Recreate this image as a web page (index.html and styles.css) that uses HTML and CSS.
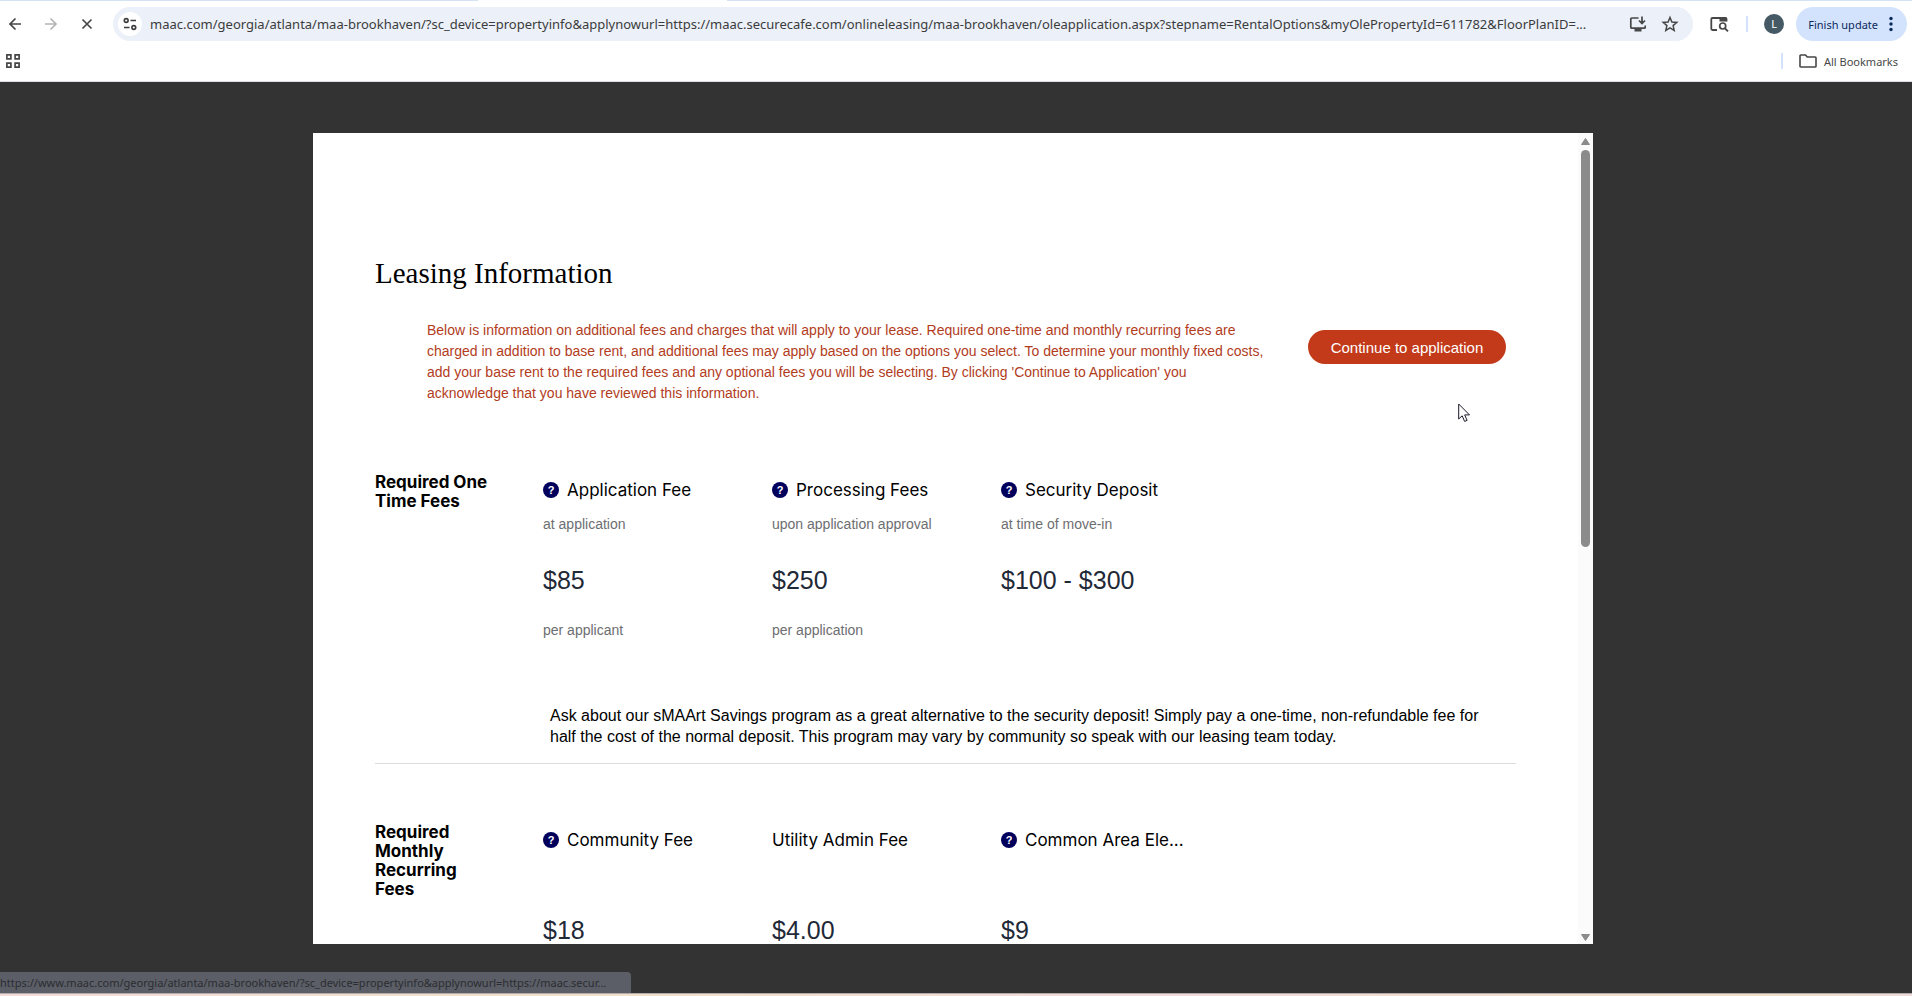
FILE: index.html
```html
<!DOCTYPE html>
<html lang="en">
<head>
<meta charset="utf-8">
<title>Leasing Information</title>
<link rel="stylesheet" href="styles.css">
</head>
<body>
<div class="browser">
  <header class="chrome">
    <div class="tab-edge"></div>
    <div class="toolbar">
      <nav class="nav">
        <button class="icon-btn" aria-label="Back"><svg width="18" height="18" viewBox="0 0 18 18"><path d="M9.500 3.500 4 9l5.500 5.500M4 9h11" fill="none" stroke="#474747" stroke-width="1.700"/></svg></button>
        <button class="icon-btn" aria-label="Forward"><svg width="18" height="18" viewBox="0 0 18 18"><path d="M8.500 3.500 14 9l-5.500 5.500M14 9H3" fill="none" stroke="#b4b4b4" stroke-width="1.700"/></svg></button>
        <button class="icon-btn" aria-label="Stop"><svg width="18" height="18" viewBox="0 0 18 18"><path d="M4.500 4.500l9 9M13.500 4.500l-9 9" fill="none" stroke="#474747" stroke-width="1.700"/></svg></button>
      </nav>
      <div class="omnibox">
        <button class="site-info" aria-label="View site information"><svg width="14" height="14" viewBox="0 0 14 14" fill="none" stroke="#3c3c3c" stroke-width="1.600"><circle cx="3.200" cy="3.500" r="1.900"/><path d="M7.500 3.500H13M1 10.500h5.500"/><circle cx="10.800" cy="10.500" r="1.900"/></svg></button>
        <input class="url" type="text" aria-label="Address" readonly value="maac.com/georgia/atlanta/maa-brookhaven/?sc_device=propertyinfo&amp;applynowurl=https://maac.securecafe.com/onlineleasing/maa-brookhaven/oleapplication.aspx?stepname=RentalOptions&amp;myOlePropertyId=611782&amp;FloorPlanID=...">
        <button class="icon-btn" aria-label="Install app"><svg width="18" height="18" viewBox="0 0 18 18" fill="none" stroke="#474747" stroke-width="1.700"><path d="M9.500 3H2.800c-.6 0-1 .4-1 1v8.200c0 .6.400 1 1 1h12.400c.6 0 1-.4 1-1V10.500M13 1.500v6.500M10 5.500l3 3 3-3"/><path d="M5.500 15.200h7" stroke-width="2.600"/></svg></button>
        <button class="icon-btn" aria-label="Bookmark this tab"><svg width="18" height="18" viewBox="0 0 18 18"><path d="M9 2.500l1.900 4.500 4.900.4-3.700 3.200 1.100 4.800L9 12.900l-4.200 2.500 1.100-4.800-3.700-3.200 4.900-.4z" fill="none" stroke="#474747" stroke-width="1.500"/></svg></button>
      </div>
      <button class="icon-btn lens" aria-label="Search this page"><svg width="20" height="18" viewBox="0 0 20 18"><path d="M8 15H3.500c-.7 0-1.200-.5-1.200-1.200V4.200C2.300 3.500 2.800 3 3.500 3h13c.6 0 1 .4 1 1v2.500" fill="none" stroke="#474747" stroke-width="1.800"/><path d="M10.500 2.500h7v4h-7z" fill="#474747"/><circle cx="13.700" cy="11" r="3" fill="none" stroke="#474747" stroke-width="1.700"/><path d="M16 13.300l3 3" stroke="#474747" stroke-width="1.900"/></svg></button>
      <span class="sep"></span>
      <button class="avatar" aria-label="Profile">L</button>
      <button class="update"><span>Finish update</span><svg width="4" height="16" viewBox="0 0 4 16" fill="#0b2a5c"><circle cx="2" cy="2.500" r="1.700"/><circle cx="2" cy="8" r="1.700"/><circle cx="2" cy="13.500" r="1.700"/></svg></button>
    </div>
    <div class="bookmarks">
      <button class="icon-btn" aria-label="Apps"><svg width="14" height="14" viewBox="0 0 14 14" fill="none" stroke="#474747" stroke-width="1.700"><path d="M.9.900h4v4h-4zM9.100.900h4v4h-4zM.9 9.100h4v4h-4zM9.100 9.100h4v4h-4z"/></svg></button>
      <div class="all">
        <span class="sep"></span>
        <button class="all-btn"><svg width="18" height="14" viewBox="0 0 18 14"><path d="M1.800 1h4.700l1.800 2h7.900c.5 0 .8.300.8.800v8.400c0 .5-.3.800-.8.800H1.800c-.5 0-.8-.3-.8-.8V1.800c0-.5.300-.8.800-.8z" fill="none" stroke="#474747" stroke-width="1.600"/></svg><span>All Bookmarks</span></button>
      </div>
    </div>
  </header>
  <main class="page">
    <div class="dialog" role="dialog" aria-labelledby="title">
      <div class="content">
        <h1 class="title" id="title">Leasing Information</h1>
        <div class="intro">
          <p class="intro-text">Below is information on additional fees and charges that will apply to your lease. Required one-time and monthly recurring fees are<br>charged in addition to base rent, and additional fees may apply based on the options you select. To determine your monthly fixed costs,<br>add your base rent to the required fees and any optional fees you will be selecting. By clicking 'Continue to Application' you<br>acknowledge that you have reviewed this information.</p>
          <button class="continue">Continue to application</button>
        </div>
        <section class="fees">
          <h2 class="group">Required One<br>Time Fees</h2>
          <article class="fee">
            <h3 class="name"><button class="help" aria-label="About Application Fee">?</button>Application Fee</h3>
            <p class="when">at application</p>
            <p class="amount">$85</p>
            <p class="per">per applicant</p>
          </article>
          <article class="fee">
            <h3 class="name"><button class="help" aria-label="About Processing Fees">?</button>Processing Fees</h3>
            <p class="when">upon application approval</p>
            <p class="amount">$250</p>
            <p class="per">per application</p>
          </article>
          <article class="fee">
            <h3 class="name"><button class="help" aria-label="About Security Deposit">?</button>Security Deposit</h3>
            <p class="when">at time of move-in</p>
            <p class="amount">$100 - $300</p>
          </article>
          <p class="note">Ask about our sMAArt Savings program as a great alternative to the security deposit! Simply pay a one-time, non-refundable fee for<br>half the cost of the normal deposit. This program may vary by community so speak with our leasing team today.</p>
        </section>
        <section class="fees monthly">
          <h2 class="group">Required<br>Monthly<br>Recurring<br>Fees</h2>
          <article class="fee">
            <h3 class="name"><button class="help" aria-label="About Community Fee">?</button>Community Fee</h3>
            <p class="when"></p>
            <p class="amount">$18</p>
          </article>
          <article class="fee">
            <h3 class="name">Utility Admin Fee</h3>
            <p class="when"></p>
            <p class="amount">$4.00</p>
          </article>
          <article class="fee">
            <h3 class="name"><button class="help" aria-label="About Common Area Electric">?</button>Common Area Ele...</h3>
            <p class="when"></p>
            <p class="amount">$9</p>
          </article>
        </section>
      </div>
      <div class="scrollbar">
        <svg width="9" height="7" viewBox="0 0 9 7"><path d="M4.500.5 8.500 6.500h-8z" fill="#8b8b8b" stroke="#8b8b8b" stroke-linejoin="round"/></svg>
        <div class="track"><div class="thumb"></div></div>
        <svg width="9" height="7" viewBox="0 0 9 7"><path d="M4.500 6.500 8.500.5h-8z" fill="#8b8b8b" stroke="#8b8b8b" stroke-linejoin="round"/></svg>
      </div>
    </div>
    <div class="status"><span>https://www.maac.com/georgia/atlanta/maa-brookhaven/?sc_device=propertyinfo&amp;applynowurl=https://maac.secur...</span></div>
    <svg class="cursor" width="13" height="20" viewBox="0 0 13 20"><path d="M.7 1v15l3.500-3.200 2.400 5.600 2.500-1-2.400-5.500h4.800z" fill="#fff" stroke="#1b1b2a"/></svg>
  </main>
  <div class="desktop-edge"></div>
</div>
</body>
</html>
```
FILE: styles.css
```css
* { box-sizing: border-box; }
body, h1, h2, h3, p { margin: 0; }
body { font-family: "Liberation Sans", Arial, sans-serif; background: #333; }
button, input { font: inherit; color: inherit; border: 0; padding: 0; margin: 0; background: none; }

.browser { display: flex; flex-direction: column; height: 100vh; overflow: hidden; }

/* Browser toolbar */
.chrome { flex: none; background: #fff; border-bottom: 1px solid #dcdfe3; font-family: "Noto Sans", "Open Sans", sans-serif; color: #474747; }
.tab-edge { height: 1px; background: linear-gradient(90deg, #d3e3f3 25%, #fff 25%, #fff 38%, #d3e3f3 38%); }
.toolbar { display: flex; align-items: center; height: 46px; padding: 0 5px 0 6px; }
.nav { display: flex; gap: 18px; margin-right: 17px; }
.icon-btn { display: flex; align-items: center; justify-content: center; flex: none; width: 18px; height: 18px; }
.omnibox { display: flex; align-items: center; flex: 1; min-width: 0; height: 34px; padding: 0 14px 0 5px; border-radius: 17px; background: #ebf0f9; gap: 14px; }
.site-info { display: flex; align-items: center; justify-content: center; flex: none; width: 24px; height: 24px; border-radius: 12px; background: #fff; margin-right: -6px; }
.url { flex: 1; min-width: 0; height: 24px; font-size: 13px; color: #3c3c3c; outline: 0; }
.lens { width: 20px; margin: 0 17px 0 16px; }
.sep { width: 2px; height: 16px; background: #d3e3fd; }
.avatar { width: 20px; height: 20px; margin: 0 12px 0 16px; border-radius: 10px; background: #455a64; color: #fff; font-size: 11px; line-height: 20px; text-align: center; }
.update { display: flex; align-items: center; gap: 11px; height: 34px; padding: 0 14px 0 12px; border-radius: 17px; background: #d3e3fd; color: #0b2a5c; font-size: 11px; }
.bookmarks { display: flex; align-items: center; justify-content: space-between; height: 34px; padding: 0 14px 6px 4px; }
.all { display: flex; align-items: center; gap: 16px; }
.all-btn { display: flex; align-items: center; gap: 7px; font-size: 11px; }

/* Dimmed page with the leasing dialog */
.page { position: relative; flex: 1; min-height: 0; display: grid; grid-template-columns: 313fr 1280fr 319fr; padding: 51px 0 49px; background: #333; }
.dialog { grid-column: 2; display: flex; min-height: 0; background: #fff; overflow: hidden; }
.content { flex: 1; min-width: 0; padding: 120px 62px 0; }
.title { font: 400 29px/40px "Liberation Serif", "Times New Roman", serif; color: #000; }
.intro { display: flex; align-items: flex-start; justify-content: space-between; padding: 27px 10px 0 52px; white-space: nowrap; }
.intro-text { font-size: 14px; line-height: 21px; color: #b23c1c; }
.continue { flex: none; width: 198px; height: 34px; margin-top: 10px; border-radius: 17px; background: #c33a1a; color: #fff; font-size: 15px; }
.fees { display: grid; grid-template-columns: 168fr 229fr 229fr 229fr 286fr; padding: 67px 0 16px; border-bottom: 1px solid #dcdcdc; }
.monthly { padding-top: 57px; }
.group { padding-top: 2px; font: 700 17px/19px "Inter", sans-serif; color: #000; }
.fee { padding-top: 7px; }
.name { display: flex; align-items: center; gap: 8px; font: 400 17px/24px "Inter", sans-serif; color: #000; white-space: nowrap; }
.help { flex: none; width: 16px; height: 16px; border-radius: 8px; background: #00005c; color: #fff; font: 700 11px/16px "Liberation Sans", sans-serif; text-align: center; }
.when, .per { height: 20px; font-size: 14px; line-height: 20px; color: #6d6e71; }
.when { margin-top: 12px; }
.amount { margin: 31px 0 25px; font-size: 25px; line-height: 30px; color: #1f2937; }
.note { grid-column: 2 / -1; margin: 65px 0 0 7px; font-size: 16px; line-height: 21px; color: #000; white-space: nowrap; }

.scrollbar { flex: none; display: flex; flex-direction: column; align-items: center; gap: 5px; width: 15px; padding: 5px 0 3px; background: #fbfbfb; }
.track { flex: 1; width: 9px; }
.thumb { height: 51%; border-radius: 5px; background: #8b8b8b; }

/* Link preview and pointer lie over the page */
.status { position: absolute; left: 0; bottom: 0; width: 33%; height: 21px; overflow: hidden; border-top-right-radius: 4px; background: #5b5e66; color: #2b2d31; font: 11px/21px "Noto Sans", sans-serif; white-space: nowrap; }
.cursor { position: absolute; left: 1458px; top: 321px; }
.desktop-edge { flex: none; height: 3px; border-top: 1px solid #b5aaaa; background: linear-gradient(90deg, #f3dcdc, #f0e2c8 30%, #f3dcdc 60%, #efe0c6 92%, #ecdcd8); }
```
